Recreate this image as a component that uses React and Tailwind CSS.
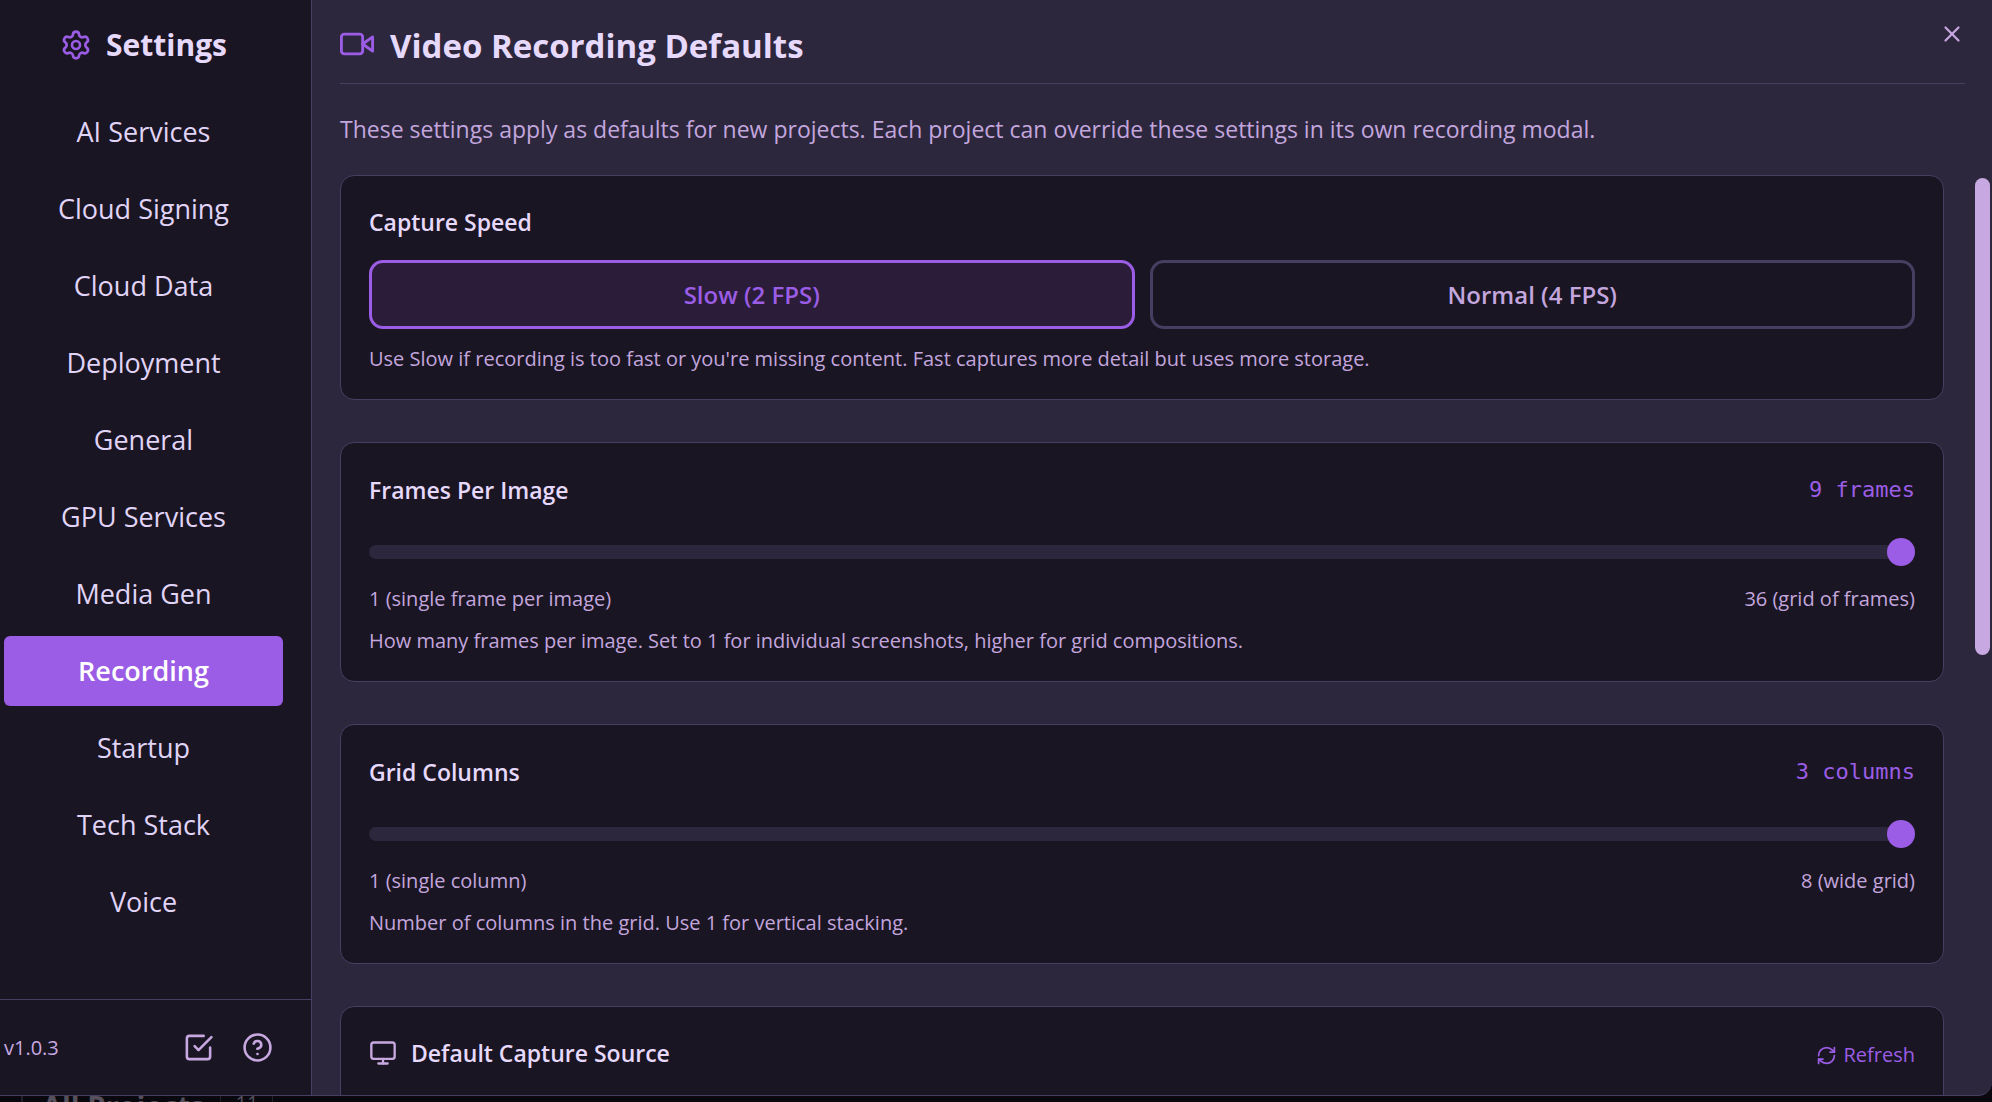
import React, { useState } from 'react';
import { Settings, RefreshCw, X } from 'lucide-react';
import { FiVideo, FiCheckSquare, FiHelpCircle, FiMonitor } from 'react-icons/fi';

const sections = [
  'AI Services',
  'Cloud Signing',
  'Cloud Data',
  'Deployment',
  'General',
  'GPU Services',
  'Media Gen',
  'Recording',
  'Startup',
  'Tech Stack',
  'Voice',
];

const speeds = ['Slow (2 FPS)', 'Normal (4 FPS)'];

const Card = ({ children }) => (
  <section className="shrink-0 rounded-[14px] border border-[#473f61] bg-[#1a1523] px-7">{children}</section>
);

const SliderCard = ({ id, title, value, max, minLabel, maxLabel, hint }) => (
  <Card>
    <div className="flex h-[83px] items-center justify-between pt-2.5">
      <label htmlFor={id} className="text-[23px] leading-8 font-semibold text-[#e6d9fb]">
        {title}
      </label>
      <output htmlFor={id} className="font-['DejaVu_Sans_Mono',monospace] text-[22px] leading-8 text-[#9b5de5]">
        {value}
      </output>
    </div>
    <div className="flex h-[52px] items-center">
      <input
        id={id}
        type="range"
        min="1"
        max={max}
        defaultValue={max}
        className="h-[14px] w-full appearance-none rounded-full bg-[#2d273e] [&::-webkit-slider-thumb]:h-7 [&::-webkit-slider-thumb]:w-7 [&::-webkit-slider-thumb]:appearance-none [&::-webkit-slider-thumb]:rounded-full [&::-webkit-slider-thumb]:bg-[#9b5de5]"
      />
    </div>
    <div className="flex justify-between text-[20px] leading-[42px] text-[#c3a6dd]">
      <span>{minLabel}</span>
      <span>{maxLabel}</span>
    </div>
    <p className="pb-[19px] text-[20px] leading-[42px] text-[#c3a6dd]">{hint}</p>
  </Card>
);

const Sidebar = () => {
  const [active, setActive] = useState('Recording');

  return (
    <aside className="flex w-[312px] shrink-0 flex-col border-r border-[#473f61] bg-[#1a1523]">
      <h1 className="flex h-[97px] items-center justify-center gap-3.5 pr-6 pb-2 text-[30px] font-bold text-[#e6d9fb]">
        <Settings size={32} className="text-[#9b5de5]" />
        Settings
      </h1>
      <nav className="flex flex-1 flex-col gap-[7px] pr-7 pl-1">
        {sections.map((name) => (
          <button
            key={name}
            onClick={() => setActive(name)}
            className={
              name === active
                ? 'h-[70px] rounded-md bg-[#9b5de5] text-[27px] font-semibold text-white'
                : 'h-[70px] rounded-md text-[27px] text-[#e0d4f7]'
            }
          >
            {name}
          </button>
        ))}
      </nav>
      <div className="flex h-24 items-center border-t border-[#473f61] pr-[38px] pl-1 text-[#c8a8e0]">
        <span className="flex-1 text-[20px]">v1.0.3</span>
        <button aria-label="Tasks" className="mr-7">
          <FiCheckSquare size={31} />
        </button>
        <button aria-label="Help">
          <FiHelpCircle size={31} />
        </button>
      </div>
    </aside>
  );
};

const App = () => {
  const [speed, setSpeed] = useState(speeds[0]);

  return (
    <div className="flex h-screen flex-col overflow-hidden bg-[#0a080f] font-['Open_Sans','Noto_Sans',sans-serif]">
      <div className="flex min-h-0 flex-1 overflow-hidden rounded-br-[14px] border-b border-[#473f61] bg-[#2d273e]">
        <Sidebar />

        <main className="flex min-w-0 flex-1 flex-col pl-7">
          <header className="mr-[27px] flex h-[84px] shrink-0 items-center border-b border-[#473f61] pt-2">
            <FiVideo size={34} className="mr-4 mb-1 text-[#9b5de5]" />
            <h2 className="flex-1 text-[33px] leading-10 font-bold text-[#e6d9fb]">Video Recording Defaults</h2>
            <button aria-label="Close" className="self-start pt-[13px] text-[#c8a8e0]">
              <X size={26} />
            </button>
          </header>

          <p className="flex h-[91px] shrink-0 items-center text-[23px] text-[#c3a6dd]">
            These settings apply as defaults for new projects. Each project can override these settings in its own
            recording modal.
          </p>

          <div className="flex min-h-0 flex-1">
            <div className="flex min-w-0 flex-1 flex-col gap-[42px] overflow-hidden">
              <Card>
                <h3 className="pt-[30px] pb-[22px] text-[23px] leading-8 font-semibold text-[#e6d9fb]">
                  Capture Speed
                </h3>
                <div className="grid grid-cols-2 gap-[15px]">
                  {speeds.map((name) => (
                    <button
                      key={name}
                      onClick={() => setSpeed(name)}
                      className={
                        name === speed
                          ? 'h-[69px] rounded-[14px] border-3 border-[#9b5de5] bg-[#2b1c39] text-[24px] font-semibold text-[#9b5de5]'
                          : 'h-[69px] rounded-[14px] border-3 border-[#473f61] text-[24px] font-semibold text-[#c3a6dd]'
                      }
                    >
                      {name}
                    </button>
                  ))}
                </div>
                <p className="pt-[9px] pb-[19px] text-[20px] leading-[42px] text-[#c3a6dd]">
                  Use Slow if recording is too fast or you're missing content. Fast captures more detail but uses more
                  storage.
                </p>
              </Card>

              <SliderCard
                id="frames"
                title="Frames Per Image"
                value="9 frames"
                max="36"
                minLabel="1 (single frame per image)"
                maxLabel="36 (grid of frames)"
                hint="How many frames per image. Set to 1 for individual screenshots, higher for grid compositions."
              />

              <SliderCard
                id="columns"
                title="Grid Columns"
                value="3 columns"
                max="8"
                minLabel="1 (single column)"
                maxLabel="8 (wide grid)"
                hint="Number of columns in the grid. Use 1 for vertical stacking."
              />

              <Card>
                <div className="flex h-[140px] items-start pt-[30px] text-[#c8a8e0]">
                  <FiMonitor size={28} className="mt-0.5 mr-3.5" />
                  <h3 className="flex-1 text-[23px] leading-8 font-semibold text-[#e6d9fb]">Default Capture Source</h3>
                  <button className="flex items-center gap-1.5 text-[20px] leading-9 text-[#9b5de5]">
                    <RefreshCw size={21} />
                    Refresh
                  </button>
                </div>
              </Card>
            </div>

            {/* Scrollbar */}
            <div className="ml-[31px] w-[17px] shrink-0 pt-[3px]">
              <div className="h-[52%] w-[15px] rounded-full bg-[#c8a8e0]" />
            </div>
          </div>
        </main>
      </div>

      {/* Page behind the dialog */}
      <div className="flex h-[6px] shrink-0 overflow-hidden pl-[21px] text-[#55505c]">
        <span className="border-l-2 border-[#24202c] pr-4 pl-[19px] text-[29px] leading-5 font-bold">All Projects</span>
        <span className="border-x border-[#24202c] px-3.5 text-[20px] leading-[14px]">11</span>
      </div>
    </div>
  );
};

export default App;
